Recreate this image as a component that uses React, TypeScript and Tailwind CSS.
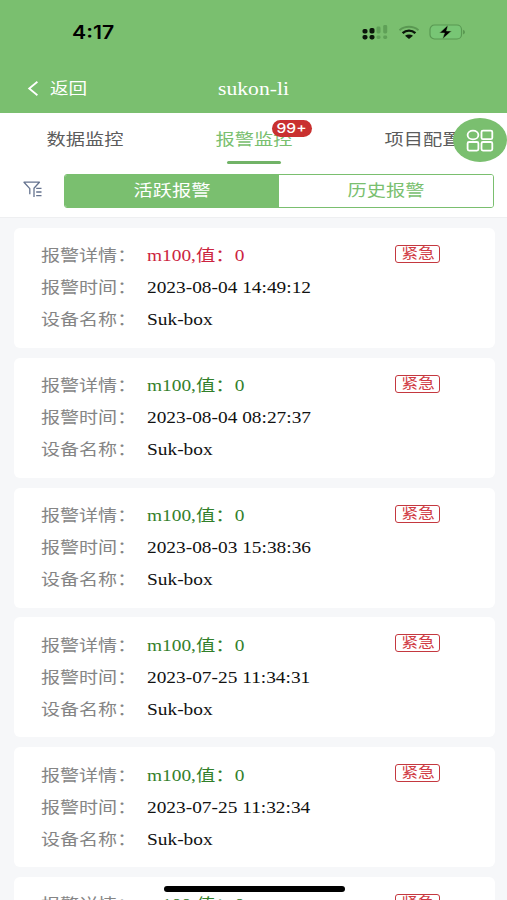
import { useState } from "react";

interface Alarm {
  readonly id: number;
  readonly detail: string;
  readonly time: string;
  readonly device: string;
  readonly active?: boolean;
}

const ALARMS: readonly Alarm[] = [
  { id: 1, detail: "m100,值：0", time: "2023-08-04 14:49:12", device: "Suk-box", active: true },
  { id: 2, detail: "m100,值：0", time: "2023-08-04 08:27:37", device: "Suk-box" },
  { id: 3, detail: "m100,值：0", time: "2023-08-03 15:38:36", device: "Suk-box" },
  { id: 4, detail: "m100,值：0", time: "2023-07-25 11:34:31", device: "Suk-box" },
  { id: 5, detail: "m100,值：0", time: "2023-07-25 11:32:34", device: "Suk-box" },
  { id: 6, detail: "m100,值：0", time: "2023-07-25 11:30:12", device: "Suk-box" },
];

const TABS = ["数据监控", "报警监控", "项目配置"] as const;
const MODES = ["活跃报警", "历史报警"] as const;

function StatusBar() {
  return (
    <div className="flex h-16 items-center justify-between pr-[41px] pl-[72px] text-black">
      <span className="origin-left scale-x-[1.18] pt-px font-['Inter',sans-serif] text-[18px] leading-none font-semibold">
        4:17
      </span>
      <div className="flex items-center">
        <svg width="26" height="16" viewBox="0 0 26 16" aria-hidden="true">
          <g fill="#0b160a">
            <rect x="0.5" y="5" width="5" height="4.6" rx="1.8" />
            <rect x="0.5" y="11" width="5" height="4.4" rx="1.8" />
            <rect x="7.5" y="4" width="5" height="5.6" rx="1.8" />
            <rect x="7.5" y="11" width="5" height="4.4" rx="1.8" />
          </g>
          <g fill="#5fa057">
            <rect x="14.5" y="2.5" width="4" height="7" rx="1.4" />
            <rect x="14.5" y="11.5" width="4" height="3.5" rx="1.4" />
            <rect x="21.2" y="1" width="4" height="8.5" rx="1.4" />
            <rect x="21.2" y="11.5" width="4" height="3.5" rx="1.4" />
          </g>
        </svg>
        <svg className="ml-[10px]" width="22" height="14" viewBox="0 0 22 14" fill="none" aria-hidden="true">
          <path d="M1.5 5.2C6.8 0.6 15.2 0.6 20.5 5.2" stroke="#5a9852" strokeWidth="1.8" />
          <path d="M4.6 8.2C8.4 4.7 13.6 4.7 17.4 8.2" stroke="#0b160a" strokeWidth="2.4" />
          <path d="M7 10.8C9.4 8.9 12.6 8.9 15 10.8L11 14Z" fill="#0b160a" />
        </svg>
        <svg className="ml-[9px]" width="37" height="16" viewBox="0 0 37 16" aria-hidden="true">
          <rect x="1" y="1" width="31.5" height="14" rx="4.5" fill="#78c675" stroke="#599852" strokeWidth="1.2" />
          <path d="M34.3 5.8V10.4C36.2 9.6 36.2 6.6 34.3 5.8Z" fill="#4c8745" />
          <path d="M19 1L10.5 9H15.5L13.5 15L22.5 7H17.5Z" fill="#000" stroke="#7abf6f" strokeWidth="0.5" />
        </svg>
      </div>
    </div>
  );
}

function NavBar() {
  return (
    <div className="grid h-12 grid-cols-3 items-center text-white">
      <button type="button" className="flex items-center pt-px pl-[27px]">
        <svg width="12" height="15" viewBox="0 0 12 15" fill="none" aria-hidden="true">
          <path d="M10.4 0.8L2.2 7.5L10.4 14.2" stroke="currentColor" strokeWidth="1.8" />
        </svg>
        <span className="ml-[11px] origin-left scale-x-[1.16] text-base leading-none">返回</span>
      </button>
      <h1 className="scale-x-[1.2] pt-px text-center font-['Liberation_Serif',serif] text-[18px] leading-none">
        sukon-li
      </h1>
    </div>
  );
}

function FilterIcon() {
  return (
    <svg width="20" height="17" viewBox="0 0 20 17" fill="none" stroke="#65738f" strokeWidth="1.3" aria-hidden="true">
      <path d="M6.8 13.2V7.6L1 1.2H16.4L11 7.2V16" strokeLinejoin="round" />
      <path d="M13.2 7.4H18.5M13.2 11H18.5M13.2 14.6H18.5" />
    </svg>
  );
}

function AlarmRow({ label, value, className }: { label: string; value: string; className: string }) {
  return (
    <div className="flex h-8 items-center text-base">
      <span className="w-[106px] shrink-0 whitespace-nowrap text-[#858585]">
        <span className="inline-block origin-left scale-x-[1.19]">{label}：</span>
      </span>
      <span
        className={`origin-left scale-x-[1.21] font-['Liberation_Serif','Noto_Sans_CJK_SC',serif] whitespace-nowrap ${className}`}
      >
        {value}
      </span>
    </div>
  );
}

function AlarmCard({ alarm }: { alarm: Alarm }) {
  return (
    <li className="flex h-[120px] shrink-0 justify-between rounded-md bg-white pt-[12.4px] pr-[55px] pl-[27px]">
      <div>
        <AlarmRow
          label="报警详情"
          value={alarm.detail}
          className={alarm.active ? "text-[#cc2440]" : "text-[#33802b]"}
        />
        <AlarmRow label="报警时间" value={alarm.time} className="text-[#111]" />
        <AlarmRow label="设备名称" value={alarm.device} className="text-[#111]" />
      </div>
      <span className="mt-[4.6px] flex h-[18px] w-[45px] items-center justify-center rounded-[3px] border border-[#c4383f] pb-[2px] text-[#d03a43]">
        <span className="scale-x-[1.2] text-[14px] leading-none whitespace-nowrap">紧急</span>
      </span>
    </li>
  );
}

export default function App() {
  const [tab, setTab] = useState(1);
  const [mode, setMode] = useState(0);

  return (
    <div className="relative flex h-[900px] w-[507px] flex-col overflow-hidden bg-[#f6f7f9] font-['Liberation_Sans','Noto_Sans_CJK_SC',sans-serif]">
      <header className="h-[113px] shrink-0 bg-[#7abf6f]">
        <StatusBar />
        <NavBar />
      </header>

      <div className="h-[105px] shrink-0 border-b border-[#eeeff1] bg-white">
        <div className="grid h-[51px] grid-cols-3">
          {TABS.map((label, index) => (
            <button
              key={label}
              type="button"
              onClick={() => setTab(index)}
              className={`relative flex items-center justify-center pt-[2px] ${
                index === tab ? "text-[#7abf6f]" : "text-[#5c5c5c]"
              }`}
            >
              <span className="ml-px scale-x-[1.2] text-base leading-none whitespace-nowrap">{label}</span>
              {index === tab && <span className="absolute bottom-0 h-[3px] w-[54px] rounded-full bg-[#71b367]" />}
              {index === 1 && (
                <span className="absolute top-[7px] left-[103px] flex h-[17px] w-10 items-center justify-center rounded-full bg-[#c9302f] text-white">
                  <span className="scale-x-[1.2] font-['Inter',sans-serif] text-[13px] leading-none font-medium">
                    99+
                  </span>
                </span>
              )}
            </button>
          ))}
        </div>

        <div className="flex items-center pt-[10px] pr-[13px] pl-[23px]">
          <button type="button" aria-label="筛选" className="-mt-1 w-10">
            <FilterIcon />
          </button>
          <div className="ml-px grid h-[34px] flex-1 grid-cols-2 overflow-hidden rounded-[3px] border border-[#7abf6f]">
            {MODES.map((label, index) => (
              <button
                key={label}
                type="button"
                onClick={() => setMode(index)}
                className={`flex items-center justify-center ${
                  index === mode ? "bg-[#7abf6f] text-white" : "bg-white text-[#7abf6f]"
                }`}
              >
                <span className="scale-x-[1.2] text-base leading-none whitespace-nowrap">{label}</span>
              </button>
            ))}
          </div>
        </div>
      </div>

      <ul className="flex flex-col gap-[9.8px] pt-[10px] pr-3 pl-[14px]">
        {ALARMS.map((alarm) => (
          <AlarmCard key={alarm.id} alarm={alarm} />
        ))}
      </ul>

      <button
        type="button"
        aria-label="菜单"
        className="absolute top-[118px] left-[453px] flex h-11 w-[54px] items-center justify-center rounded-[50%] bg-[#7abf6f]"
      >
        <svg width="28" height="23" viewBox="0 0 28 23" fill="none" stroke="#fff" strokeWidth="1.8" aria-hidden="true">
          <ellipse cx="7" cy="6" rx="5.4" ry="4.4" />
          <rect x="15.5" y="1.6" width="10.8" height="8.6" rx="1.5" />
          <rect x="1.6" y="13" width="10.8" height="8.6" rx="1.5" />
          <rect x="15.5" y="13" width="10.8" height="8.6" rx="1.5" />
        </svg>
      </button>

      <div className="absolute bottom-2 left-[164px] h-[6px] w-[181px] rounded-full bg-black" />
    </div>
  );
}
